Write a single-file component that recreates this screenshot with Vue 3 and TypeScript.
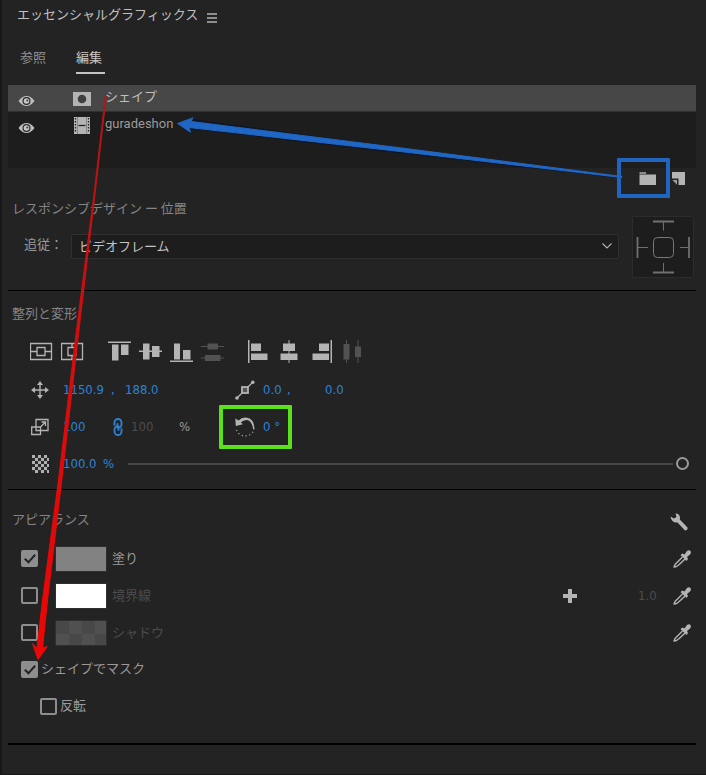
<script setup lang="ts">
import { ref } from 'vue'

interface Layer {
  name: string
  kind: 'shape' | 'clip'
}

interface Appearance {
  id: string
  label: string
  on: boolean
  swatch: string
  dim: boolean
  width?: string
}

const tabs = ['参照', '編集']
const activeTab = ref('編集')

const layers: Layer[] = [
  { name: 'シェイプ', kind: 'shape' },
  { name: 'guradeshon', kind: 'clip' },
]
const selectedLayer = ref(0)

const follow = ref('ビデオフレーム')
const position = ref({ x: '1150.9', y: '188.0' })
const anchor = ref({ x: '0.0', y: '0.0' })
const scale = ref({ w: '100', h: '100' })
const rotation = ref('0 °')
const opacity = ref('100.0')
const opacitySlider = ref(100)

const appearance = ref<Appearance[]>([
  { id: 'fill', label: '塗り', on: true, swatch: 'gray', dim: false },
  { id: 'stroke', label: '境界線', on: false, swatch: 'white', dim: true, width: '1.0' },
  { id: 'shadow', label: 'シャドウ', on: false, swatch: 'checker', dim: true },
])
const maskWithShape = ref(true)
const invert = ref(false)

const checkerCells: number[][] = []
for (let r = 0; r < 6; r++) {
  for (let c = 0; c < 6; c++) {
    if ((r + c) % 2 === 0) checkerCells.push([1 + c * 3, r * 3])
  }
}
</script>

<template>
  <main class="panel">
    <header class="title">
      <h1>エッセンシャルグラフィックス</h1>
      <button class="icon-btn menu" aria-label="パネルメニュー">
        <svg width="10" height="10" viewBox="0 0 10 10"><path d="M0 1H10M0 5H10M0 9H10" stroke="#b4b4b4" stroke-width="1.3" /></svg>
      </button>
    </header>

    <nav class="tabs">
      <button v-for="t in tabs" :key="t" class="tab" :class="{ active: t === activeTab }" @click="activeTab = t">{{ t }}</button>
    </nav>

    <ul class="layers">
      <li v-for="(l, i) in layers" :key="l.name" class="layer" :class="{ selected: i === selectedLayer }" @click="selectedLayer = i">
        <button class="icon-btn eye" aria-label="表示切り替え">
          <svg width="17" height="12" viewBox="0 0 17 12">
            <path d="M.5 6Q4 1 8.500 1T16.500 6Q13 11 8.500 11T.5 6Z" fill="#bdbdbd" />
            <circle cx="8.500" cy="6" r="4" fill="#2b2b2b" />
            <circle cx="8.500" cy="6" r="2.800" fill="#c8c8c8" />
            <circle cx="9.300" cy="5.500" r="1.100" fill="#444" />
          </svg>
        </button>
        <svg v-if="l.kind === 'shape'" class="kind" width="18" height="18" viewBox="0 0 18 18">
          <rect y="2" width="18" height="14" fill="#b4b4b4" />
          <circle cx="9" cy="9" r="4.300" fill="#404040" />
        </svg>
        <svg v-else class="kind" width="18" height="18" viewBox="0 0 18 18">
          <rect x="1" y="0" width="16" height="17" fill="#b4b4b4" />
          <path d="M2.500 1V16M15.500 1V16" stroke="#222" stroke-width="1.300" stroke-dasharray="1.500 1.500" />
          <path d="M4.500 0V17M13.500 0V17" stroke="#666" stroke-width=".6" />
          <path d="M5.500 8.500H12.500" stroke="#222" stroke-width="1.300" />
        </svg>
        <span>{{ l.name }}</span>
      </li>
    </ul>

    <div class="layer-tools">
      <button class="icon-btn folder" aria-label="グループを作成">
        <svg width="17" height="14" viewBox="0 0 17 14">
          <path d="M.5 0H7V2H.5Z" fill="#8c8c8c" />
          <path d="M.5 2.500H17V13H.5Z" fill="#b4b4b4" />
        </svg>
      </button>
      <button class="icon-btn" aria-label="新規レイヤー">
        <svg width="13" height="14" viewBox="0 0 13 14">
          <path d="M0 0H13V13H6.500V6.500H0Z" fill="#b4b4b4" />
          <path d="M.5 8H5V12.700Z" fill="#a0a0a0" />
        </svg>
      </button>
    </div>

    <section class="responsive">
      <h2>レスポンシブデザイン ー 位置</h2>
      <div class="follow">
        <label for="follow">追従：</label>
        <div class="select-wrap">
          <select id="follow" v-model="follow">
            <option>ビデオフレーム</option>
          </select>
          <svg class="chevron" width="10" height="6" viewBox="0 0 10 6"><path d="M.5 .5L5 5L9.500 .5" fill="none" stroke="#b0b0b0" stroke-width="1.100" /></svg>
        </div>
      </div>
      <svg class="pins" width="62" height="62" viewBox="0 0 62 62">
        <rect x=".5" y=".5" width="61" height="61" rx="2" fill="#1d1d1d" stroke="#2c2c2c" />
        <rect x="21.500" y="21.500" width="20" height="20" rx="4" fill="none" stroke="#777" />
        <path d="M21 5.500H42M21 56.500H42M5.500 21V42M57 21V42" stroke="#707070" stroke-width="1.800" />
        <path d="M31.500 6V14.500M31.500 47V56M6 31.500H16M48 31.500H57" stroke="#707070" />
      </svg>
    </section>

    <section class="transform">
      <h2>整列と変形</h2>
      <div class="align">
        <button class="icon-btn" aria-label="垂直方向中央">
          <svg width="24" height="24" viewBox="0 0 24 24" fill="none" stroke="#b4b4b4" stroke-width="1.300">
            <path d="M.5 4.500H21.500V20.500H.5ZM7 8.500H15V16.500H7ZM1 12.500H7M15 12.500H21" />
          </svg>
        </button>
        <button class="icon-btn" aria-label="水平方向中央">
          <svg width="24" height="24" viewBox="0 0 24 24" fill="none" stroke="#b4b4b4" stroke-width="1.300">
            <path d="M.5 4.500H21.500V20.500H.5ZM7 8.500H15V16.500H7ZM11 4.500V8.500M11 16.500V20.500" />
          </svg>
        </button>
        <button class="icon-btn gap" aria-label="上揃え">
          <svg width="24" height="24" viewBox="0 0 24 24"><path d="M0 2.500H23V4H0ZM4 5.500H10.500V21.500H4ZM13 5.500H20.500V16H13Z" fill="#b4b4b4" /></svg>
        </button>
        <button class="icon-btn" aria-label="垂直中央揃え">
          <svg width="24" height="24" viewBox="0 0 24 24"><path d="M0 11.500H23V13H0ZM4 4.500H10.500V20.500H4ZM13 7H20.500V18H13Z" fill="#b4b4b4" /></svg>
        </button>
        <button class="icon-btn" aria-label="下揃え">
          <svg width="24" height="24" viewBox="0 0 24 24"><path d="M0 21.500H23V23H0ZM4 4.500H10V20.500H4ZM13 11H20.500V20.500H13Z" fill="#b4b4b4" /></svg>
        </button>
        <button class="icon-btn" aria-label="垂直方向に分布">
          <svg width="24" height="24" viewBox="0 0 24 24"><path d="M0 7H23V8H0ZM6.500 4.500H17V10.500H6.500ZM0 18.500H23V19.500H0ZM4 16H19.500V22H4Z" fill="#525252" /></svg>
        </button>
        <button class="icon-btn gap" aria-label="左揃え">
          <svg width="24" height="24" viewBox="0 0 24 24"><path d="M1 1H2.500V24H1ZM4 4.500H14V12H4ZM4 14.500H20.500V21H4Z" fill="#b4b4b4" /></svg>
        </button>
        <button class="icon-btn" aria-label="水平中央揃え">
          <svg width="24" height="24" viewBox="0 0 24 24"><path d="M10.500 1H11.500V24H10.500ZM5 4.500H17V12H5ZM2.500 14.500H19.500V21H2.500Z" fill="#b4b4b4" /></svg>
        </button>
        <button class="icon-btn" aria-label="右揃え">
          <svg width="24" height="24" viewBox="0 0 24 24"><path d="M21.500 1H23V24H21.500ZM10 4.500H20V12H10ZM3.500 14.500H20V21H3.500Z" fill="#b4b4b4" /></svg>
        </button>
        <button class="icon-btn" aria-label="水平方向に分布">
          <svg width="24" height="24" viewBox="0 0 24 24"><path d="M6 1H7V24H6ZM3.500 5H9.500V20.500H3.500ZM17.500 1H18.500V24H17.500ZM15 7.500H21V18H15Z" fill="#525252" /></svg>
        </button>
      </div>

      <div class="props">
        <svg width="18" height="18" viewBox="0 0 18 18">
          <path d="M9 2V16M2 9H16" stroke="#b4b4b4" stroke-width="1.400" />
          <path d="M9 0L12 4H6ZM9 18L6 14H12ZM0 9L4 6V12ZM18 9L14 12V6Z" fill="#b4b4b4" />
        </svg>
        <div class="values">
          <input v-model="position.x" class="num w48" aria-label="位置 X" />
          <span class="sep blue">,</span>
          <input v-model="position.y" class="num w48" aria-label="位置 Y" />
        </div>
        <svg width="20" height="20" viewBox="0 0 20 20">
          <path d="M2 18L18 2" stroke="#b4b4b4" stroke-width="1.300" />
          <circle cx="2" cy="18" r="1.800" fill="#b4b4b4" /><circle cx="17.800" cy="2.200" r="1.800" fill="#b4b4b4" />
          <rect x="7" y="7" width="6" height="6" fill="#555" stroke="#b4b4b4" stroke-width="1.800" />
        </svg>
        <div class="values">
          <input v-model="anchor.x" class="num w24" aria-label="アンカーポイント X" />
          <span class="sep blue wide">,</span>
          <input v-model="anchor.y" class="num w48" aria-label="アンカーポイント Y" />
        </div>
      </div>

      <div class="props">
        <svg width="18" height="18" viewBox="0 0 18 18" fill="none" stroke="#b4b4b4" stroke-width="1.300">
          <path d="M5 1.500H17V12.500H5ZM.7 9H9.500V16.500H.7Z" />
          <path d="M9 9.500L14 4.500M10.500 4H14.500V8" />
        </svg>
        <div class="values">
          <input v-model="scale.w" class="num w48" aria-label="スケール" />
          <button class="icon-btn link" aria-label="縦横比を固定">
            <svg width="10" height="18" viewBox="0 0 10 18" fill="none" stroke="#2d7fd0" stroke-width="1.900" stroke-linecap="round">
              <path d="M1.500 7V4.500A3.500 3.500 0 0 1 8.500 4.500V6.500A3 3 0 0 1 4.500 9.500V6" />
              <path d="M8.500 11V13.500A3.500 3.500 0 0 1 1.500 13.500V11.500A3 3 0 0 1 5.500 8.500V12" />
            </svg>
          </button>
          <input v-model="scale.h" class="num w48 off" aria-label="スケール（高さ）" />
          <span class="unit">%</span>
        </div>
        <svg width="20" height="20" viewBox="0 0 20 20">
          <path d="M.3 1.500L.8 9L8 7.300L5.800 5.400Q8.500 2.700 12 2.900Q17 3.500 18.200 12.500L19.600 12.300Q19.300 1.500 11 .6Q6.500 .3 3.600 3.500Z" fill="#b4b4b4" />
          <path d="M1.500 13A9 8 0 0 0 18.500 14" fill="none" stroke="#a0a0a0" stroke-width="1.300" stroke-dasharray="1.200 2.600" />
        </svg>
        <div class="values rotation">
          <input v-model="rotation" class="num w24" aria-label="回転" />
        </div>
      </div>

      <div class="props opacity">
        <svg width="18" height="18" viewBox="0 0 18 18">
          <rect x="1" y="1" width="16" height="16" fill="#2c2c2c" />
          <rect v-for="(c, i) in checkerCells" :key="i" :x="c[0]" :y="c[1]" width="3" height="3" fill="#b0b0b0" />
        </svg>
        <div class="values">
          <input v-model="opacity" class="num w40" aria-label="不透明度" />
          <span class="unit blue">%</span>
          <input v-model="opacitySlider" class="slider" type="range" min="0" max="100" aria-label="不透明度スライダー" />
        </div>
      </div>
    </section>

    <section class="appearance">
      <div class="heading">
        <h2>アピアランス</h2>
        <button class="icon-btn" aria-label="設定">
          <svg width="18" height="18" viewBox="0 0 18 18">
            <path d="M.5 3.500L4 5.500L6.500 4L5.500 .5Q9.500 .5 10 4.500L9.800 6.500L17.500 14.500Q18 17.500 15 17.500L7.500 9.500Q1.500 10 .5 3.500Z" fill="#b4b4b4" />
          </svg>
        </button>
      </div>

      <div v-for="a in appearance" :key="a.id" class="row" :class="{ dim: a.dim }">
        <input :id="a.id" v-model="a.on" type="checkbox" class="check" />
        <button class="swatch" :class="a.swatch" :aria-label="a.label + 'のカラー'"></button>
        <label :for="a.id">{{ a.label }}</label>
        <div v-if="a.width" class="stroke-tools">
          <button class="icon-btn" aria-label="境界線を追加">
            <svg width="14" height="14" viewBox="0 0 14 14"><path d="M7 0V14M0 7H14" stroke="#b4b4b4" stroke-width="4" /></svg>
          </button>
          <input v-model="a.width" class="num off stroke-width" aria-label="境界線の幅" />
        </div>
        <button class="icon-btn dropper" aria-label="スポイト">
          <svg width="18" height="18" viewBox="0 0 18 18">
            <path d="M9.500 7L2 14.500L1 17L3.500 16.500Q6 15 12 9" fill="none" stroke="#b4b4b4" stroke-width="1.400" stroke-linejoin="round" />
            <path d="M7.500 5L9.500 3.500L11.500 4.500L14 1Q16 -.5 17.500 1Q18.500 3 17 4.500L14 7L15 9L13.500 11Z" fill="#b4b4b4" />
          </svg>
        </button>
      </div>

      <div class="row mask">
        <input id="mask" v-model="maskWithShape" type="checkbox" class="check" />
        <label for="mask">シェイプでマスク</label>
      </div>
      <div class="row mask nested">
        <input id="invert" v-model="invert" type="checkbox" class="check" />
        <label for="invert">反転</label>
      </div>
    </section>

    <svg class="arrows" width="706" height="775" viewBox="0 0 706 775" aria-hidden="true">
      <defs>
        <linearGradient id="red" x1="0" y1="96" x2="0" y2="660" gradientUnits="userSpaceOnUse">
          <stop offset="0" stop-color="#b51414" /><stop offset=".5" stop-color="#d80c0c" /><stop offset="1" stop-color="#ee0505" />
        </linearGradient>
      </defs>
      <path d="M106.300 96L105.300 96L94.500 190L76.500 330L58.500 480L42.500 600L37 648L32.500 643.500L38 659.500L47.300 646.500L42.500 648L47.500 600L61.800 480L79 330L95.500 190Z" fill="url(#red)" stroke="url(#red)" stroke-width="1" stroke-linejoin="round" />
      <path d="M622 178.500L400 153.500L190 129L191 134L178 125L193 119Z" fill="#0c1626" opacity=".7" />
      <path d="M622 176.500L400 147.800L191 121.500L193 117.800L177.500 123.500L190.500 132.300L189 127.500L400 151.500L622 177.500Z" fill="#2066c4" stroke="#2066c4" stroke-width="1" stroke-linejoin="round" />
    </svg>
  </main>
</template>

<style>
body {
  margin: 0;
  background: #232323;
}
</style>

<style scoped>
.panel {
  position: relative;
  box-sizing: border-box;
  min-height: 100vh;
  padding: 0 10px 0 6px;
  border-left: 2px solid #171717;
  border-bottom: 1px solid #171717;
  background: #232323;
  color: #9a9a9a;
  font: 13px/20px "Noto Sans CJK JP", sans-serif;
}
h1,
h2 {
  margin: 0;
  font: inherit;
}
h2 {
  color: #858585;
}
button,
input,
select {
  margin: 0;
  padding: 0;
  border: 0;
  background: none;
  color: inherit;
  font: inherit;
}
svg {
  display: block;
  flex: none;
}
.icon-btn {
  flex: none;
}
.title {
  display: flex;
  align-items: center;
  gap: 9px;
  height: 28px;
  padding-left: 9px;
  color: #c0c0c0;
}
.menu {
  padding-top: 7px;
}
.tabs {
  display: flex;
  gap: 30px;
  padding: 18px 0 11px 12px;
}
.tab {
  height: 28px;
  padding-bottom: 4px;
  border-bottom: 2px solid transparent;
  color: #909090;
}
.tab.active {
  padding-right: 3px;
  border-color: #c4c4c4;
  color: #c8c8c8;
}
.layers {
  box-sizing: border-box;
  min-height: 83px;
  margin: 0;
  padding: 0;
  background: #1d1d1d;
  list-style: none;
}
.layer {
  display: flex;
  align-items: center;
  box-sizing: border-box;
  height: 27px;
  padding: 0 0 2px 10px;
  border-bottom: 1px solid transparent;
  font-family: Roboto, "Noto Sans CJK JP", sans-serif;
}
.layer.selected {
  border-color: #303030;
  background: #474747;
  background-clip: padding-box;
  color: #c0c0c0;
}
.eye {
  padding-top: 7px;
}
.kind {
  margin: 3px 14px 0 38px;
}
.layer-tools {
  display: flex;
  align-items: center;
  justify-content: flex-end;
  gap: 16px;
  height: 22px;
  padding-right: 11px;
}
.folder {
  position: relative;
}
.folder::after {
  content: "";
  position: absolute;
  inset: -14px -14px -12px -22px;
  border: 4px solid #2065bf;
  border-radius: 1px;
}
.responsive {
  display: grid;
  grid-template-columns: 1fr 62px;
  grid-template-rows: 28px 1fr;
  column-gap: 13px;
  height: 100px;
  padding: 0 2px 0 4px;
  border-bottom: 1px solid #000;
}
.responsive h2 {
  grid-column: 1;
  padding-top: 8px;
}
.follow {
  grid-column: 1;
  grid-row: 2;
  display: flex;
  align-items: flex-start;
  padding: 16px 0 0 12px;
}
.follow label {
  width: 47px;
}
.select-wrap {
  position: relative;
  flex: 1;
}
.select-wrap select {
  appearance: none;
  box-sizing: border-box;
  width: 100%;
  height: 25px;
  padding: 0 24px 2px 7px;
  border: 1px solid #303030;
  border-radius: 2px;
  background: #1d1d1d;
  color: #c4c4c4;
}
.chevron {
  position: absolute;
  right: 7px;
  top: 9px;
}
.pins {
  grid-column: 2;
  grid-row: 1 / 3;
  margin-top: 26px;
}
.transform {
  padding: 12px 0 7px 4px;
  border-bottom: 1px solid #000;
}
.align {
  display: flex;
  gap: 7px;
  padding: 16px 0 8px 18px;
}
.align .gap {
  margin-left: 16px;
}
.align .gap ~ .gap {
  margin-left: 15px;
}
.props {
  display: grid;
  grid-template-columns: 32px 172px 28px 1fr;
  align-items: center;
  height: 37px;
  padding-left: 19px;
}
.opacity {
  grid-template-columns: 32px 1fr;
}
.values {
  position: relative;
  display: flex;
  align-items: center;
}
.num,
.sep,
.unit {
  font-family: "DejaVu Sans Condensed", sans-serif;
}
.num {
  font-size: 13px;
}
.num,
.blue {
  color: #2d82d6;
}
.w48 {
  width: 48px;
}
.w40 {
  width: 40px;
}
.w24 {
  width: 24px;
}
.off {
  color: #4c4c4c;
}
.sep {
  width: 14px;
}
.sep.wide {
  width: 38px;
}
.link {
  width: 20px;
  padding-left: 2px;
}
.values .unit.blue {
  width: 25px;
}
.rotation::after {
  content: "";
  position: absolute;
  top: -12px;
  bottom: -12px;
  left: -44px;
  width: 65px;
  border: 4px solid #5ae01c;
  border-radius: 1px;
}
.slider {
  appearance: none;
  flex: 1;
  height: 14px;
  margin-right: 7px;
  background: linear-gradient(#484848, #484848) center / 100% 2px no-repeat;
}
.slider::-webkit-slider-thumb {
  appearance: none;
  box-sizing: border-box;
  width: 13px;
  height: 13px;
  border: 2px solid #9a9a9a;
  border-radius: 50%;
  background: #232323;
  box-shadow: 0 0 0 3px #232323;
}
.appearance {
  padding-bottom: 18px;
  border-bottom: 2px solid #000;
}
.heading {
  display: flex;
  justify-content: space-between;
  align-items: center;
  height: 50px;
  padding: 0 8px 0 4px;
}
.heading .icon-btn {
  padding-top: 13px;
}
.heading h2 {
  padding-top: 8px;
}
.row {
  display: flex;
  align-items: center;
  height: 37px;
  padding: 0 5px 0 13px;
}
.row label {
  padding-bottom: 2px;
}
.row.dim label {
  color: #4c4c4c;
}
.check {
  appearance: none;
  flex: none;
  box-sizing: border-box;
  width: 17px;
  height: 17px;
  border: 2px solid #8e8e8e;
  border-radius: 2px;
}
.check:checked {
  background: #8e8e8e;
}
.check:checked::after {
  content: "";
  display: block;
  box-sizing: border-box;
  width: 6px;
  height: 11px;
  margin: 0 0 0 4px;
  border: solid #232323;
  border-width: 0 2px 2px 0;
  transform: rotate(42deg);
}
.swatch {
  width: 52px;
  height: 26px;
  margin: 0 5px 0 17px;
  border: 1px solid #2f2f2f;
}
.swatch.gray {
  background: #828282;
}
.swatch.white {
  background: #fff;
}
.swatch.checker {
  background: repeating-conic-gradient(#505050 0 25%, #484848 0 50%) 0 0 / 26px 26px;
}
.stroke-tools {
  display: flex;
  align-items: center;
  gap: 61px;
  margin-left: auto;
}
.stroke-width {
  width: 35px;
}
.dropper {
  margin-left: auto;
}
.stroke-tools + .dropper {
  margin-left: 0;
}
.mask {
  gap: 3px;
}
.mask label {
  padding-bottom: 4px;
}
.nested {
  padding-left: 32px;
}
.arrows {
  position: absolute;
  top: 0;
  left: -2px;
  pointer-events: none;
}
</style>
